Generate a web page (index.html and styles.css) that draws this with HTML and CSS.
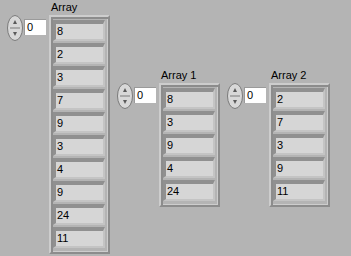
FILE: index.html
```html
<!DOCTYPE html>
<html lang="en">
  <head>
    <meta charset="UTF-8">
    <title>Arrays</title>
    <link rel="stylesheet" href="styles.css">
  </head>
  <body>
    <div class="panel">

      <div class="control">
        <div class="index">
          <svg class="spin" width="16" height="26" viewBox="0 0 16 26">
            <ellipse cx="8" cy="13" rx="7.5" ry="12.5" fill="#d8d8d8" stroke="#7a7a7a"/>
            <path d="M8 5 L10 9 L6 9 Z" fill="#5a5a5a"/>
            <path d="M8 21 L10 17 L6 17 Z" fill="#5a5a5a"/>
            <line x1="3" y1="13" x2="13" y2="13" stroke="#7a7a7a"/>
          </svg>
          <div class="idx">0</div>
        </div>
        <div class="col">
          <div class="label">Array</div>
          <div class="frame">
            <div class="cell">8</div>
            <div class="cell">2</div>
            <div class="cell">3</div>
            <div class="cell">7</div>
            <div class="cell">9</div>
            <div class="cell">3</div>
            <div class="cell">4</div>
            <div class="cell">9</div>
            <div class="cell">24</div>
            <div class="cell">11</div>
          </div>
        </div>
      </div>

      <div class="control lower">
        <div class="index">
          <svg class="spin" width="16" height="26" viewBox="0 0 16 26">
            <ellipse cx="8" cy="13" rx="7.5" ry="12.5" fill="#d8d8d8" stroke="#7a7a7a"/>
            <path d="M8 5 L10 9 L6 9 Z" fill="#5a5a5a"/>
            <path d="M8 21 L10 17 L6 17 Z" fill="#5a5a5a"/>
            <line x1="3" y1="13" x2="13" y2="13" stroke="#7a7a7a"/>
          </svg>
          <div class="idx">0</div>
        </div>
        <div class="col">
          <div class="label">Array 1</div>
          <div class="frame">
            <div class="cell">8</div>
            <div class="cell">3</div>
            <div class="cell">9</div>
            <div class="cell">4</div>
            <div class="cell">24</div>
          </div>
        </div>
      </div>

      <div class="control lower">
        <div class="index">
          <svg class="spin" width="16" height="26" viewBox="0 0 16 26">
            <ellipse cx="8" cy="13" rx="7.5" ry="12.5" fill="#d8d8d8" stroke="#7a7a7a"/>
            <path d="M8 5 L10 9 L6 9 Z" fill="#5a5a5a"/>
            <path d="M8 21 L10 17 L6 17 Z" fill="#5a5a5a"/>
            <line x1="3" y1="13" x2="13" y2="13" stroke="#7a7a7a"/>
          </svg>
          <div class="idx">0</div>
        </div>
        <div class="col">
          <div class="label">Array 2</div>
          <div class="frame">
            <div class="cell">2</div>
            <div class="cell">7</div>
            <div class="cell">3</div>
            <div class="cell">9</div>
            <div class="cell">11</div>
          </div>
        </div>
      </div>

    </div>
  </body>
</html>
```

FILE: styles.css
```css
body {
    margin: 0;
    background-color: #b4b4b4;
    font-family: "Liberation Sans", Arial, sans-serif;
    font-size: 11px;
    color: #000;
}
.panel {
    display: flex;
    align-items: flex-start;
    gap: 7px;
    padding-left: 7px;
    height: 256px;
    overflow: hidden;
}
.control {
    display: flex;
    align-items: flex-start;
}
.control.lower {
    margin-top: 68px;
}
.index {
    display: flex;
    align-items: flex-start;
    margin-top: 15px;
    margin-right: 3px;
}
.spin {
    display: block;
    margin-right: 1px;
}
.idx {
    width: 22px;
    height: 16px;
    margin-top: 4px;
    background-color: #fff;
    border-top: 1px solid #9a9a9a;
    border-left: 1px solid #9a9a9a;
    line-height: 15px;
    padding-left: 2px;
    box-sizing: border-box;
}
.label {
    height: 15px;
    line-height: 15px;
    padding-left: 2px;
}
.frame {
    width: 61px;
    box-sizing: border-box;
    border-top: 2px solid #cdcdcd;
    border-left: 2px solid #cdcdcd;
    border-right: 2px solid #8c8c8c;
    border-bottom: 2px solid #8c8c8c;
    background-color: #b4b4b4;
    box-shadow: inset 2px 2px 0 #8c8c8c, inset -1px -1px 0 #cdcdcd;
    padding: 3px 3px 4px 2px;
    display: flex;
    flex-direction: column;
    gap: 2px;
}
.cell {
    height: 15px;
    line-height: 15px;
    background-color: #d6d6d6;
    border-top: 4px solid #909090;
    border-left: 3px solid #909090;
    border-right: 2px solid #c4c4c4;
    border-bottom: 2px solid #c4c4c4;
    padding-left: 1px;
}
```
